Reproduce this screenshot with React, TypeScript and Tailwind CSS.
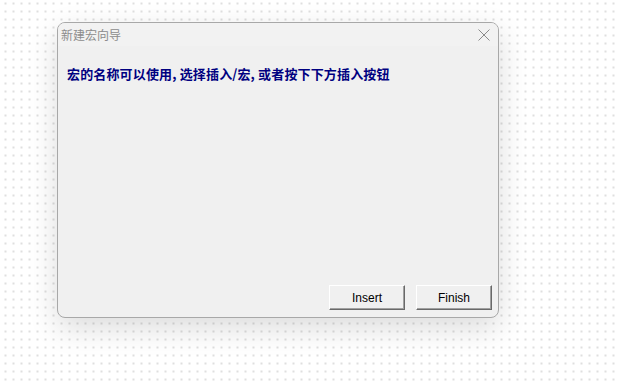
import React from "react";

function ClassicButton({ label }: { label: string }) {
  return (
    <button
      className="w-[76px] h-[25px] bg-[#f0f0f0] border-t border-l border-white border-r border-b border-r-[#696969] border-b-[#696969] shadow-[inset_-1px_-1px_0_#a0a0a0] text-[12px] text-black font-['Liberation_Sans',Arial,sans-serif] flex items-center justify-center"
    >
      {label}
    </button>
  );
}

export default function App() {
  return (
    <div className="w-[617px] h-[381px] overflow-hidden bg-white bg-[radial-gradient(circle,#cdcdcd_0.6px,transparent_0.9px)] bg-[size:8px_8px] bg-[position:1.5px_-0.5px] pl-[57px] pt-[22px]">
      {/* dialog window */}
      <div className="w-[442px] h-[296px] rounded-[8px] border border-[#a8a8a8] bg-[#f0f0f0] shadow-[0_10px_30px_rgba(0,0,0,0.14)] overflow-hidden flex flex-col">
        <div className="h-[23px] bg-[#f2f2f2] flex items-center justify-between pl-[3px] pr-[8px]">
          <span className="text-[12px] text-[#8c8c8c] font-['Noto_Sans_CJK_SC',sans-serif] leading-none">
            新建宏向导
          </span>
          <svg width="12" height="12" viewBox="0 0 12 12" className="mt-[1px]">
            <path d="M0.5 0.5 L11.5 11.5 M11.5 0.5 L0.5 11.5" stroke="#8a8a8a" strokeWidth="1" fill="none" />
          </svg>
        </div>
        <div className="flex-1 flex flex-col pl-[9px] pr-[6px] pt-[20px] pb-[7px]">
          <p className="text-[13px] font-bold text-[#000080] leading-[16px] tracking-[0.15px] font-['Noto_Sans_CJK_SC',sans-serif]">
            宏的名称可以使用, 选择插入/宏, 或者按下下方插入按钮
          </p>
          <div className="mt-auto flex justify-end gap-[11px]">
            <ClassicButton label="Insert" />
            <ClassicButton label="Finish" />
          </div>
        </div>
      </div>
    </div>
  );
}
